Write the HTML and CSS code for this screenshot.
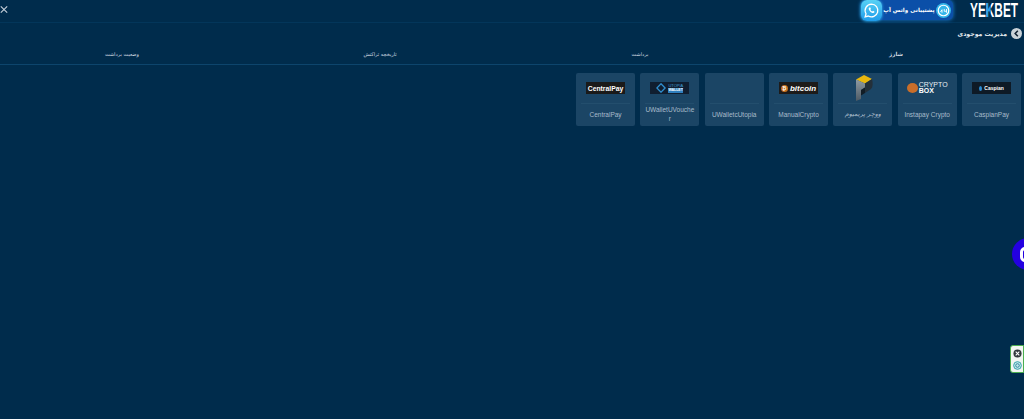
FILE: index.html
```html
<!DOCTYPE html>
<html lang="fa" dir="rtl">
<head>
<meta charset="utf-8">
<title>YEKBET</title>
<link rel="stylesheet" href="styles.css">
</head>
<body>
<div class="page">
  <header class="top">
    <svg class="logo" viewBox="0 0 50 20">
      <defs>
        <linearGradient id="logo-k" gradientUnits="userSpaceOnUse" x1="0" y1="0" x2="50" y2="0">
          <stop offset="0.36" stop-color="#ffffff"/>
          <stop offset="0.37" stop-color="#2a9fe8"/>
          <stop offset="0.44" stop-color="#2a9fe8"/>
          <stop offset="0.45" stop-color="#ffffff"/>
        </linearGradient>
      </defs>
      <text class="logo-text" x="1" y="17" textLength="48" lengthAdjust="spacingAndGlyphs" fill="url(#logo-k)">YEKBET</text>
    </svg>
    <div class="support">
      <span class="support-badge">
        <svg viewBox="0 0 20 20" class="support-ico"><circle cx="10" cy="10" r="7" fill="none" stroke="#fff" stroke-width="1.6"/><path d="M6 12l2-3v4M11 8v3h3M14 8v5" fill="none" stroke="#fff" stroke-width="1.2"/></svg>
      </span>
      <span class="support-text">پشتیبانی واتس آپ</span>
      <span class="wa">
        <svg viewBox="0 0 24 24" class="wa-ico"><path d="M12 3a9 9 0 0 0-7.700 13.600L3 21l4.500-1.200A9 9 0 1 0 12 3z" fill="none" stroke="#fff" stroke-width="1.8"/><path d="M8.800 7.600c-.8.7-1 1.900-.4 3.200 1 2.100 2.800 3.800 4.900 4.600 1.200.4 2.300 0 2.900-.9l-.2-1.100-1.900-.9-.9 1c-1.200-.5-2.200-1.500-2.800-2.700l.8-1-.8-2z" fill="#fff"/></svg>
      </span>
    </div>
    <button class="close" aria-label="close">
      <svg viewBox="0 0 10 10" class="close-ico"><path d="M1 1l8 8M9 1l-8 8" stroke="#c5d0da" stroke-width="1.4"/></svg>
    </button>
  </header>
  <div class="balance">
    <span class="back">
      <svg viewBox="0 0 10 10" class="back-ico"><path d="M6.200 2.500L3.800 5l2.400 2.500" fill="none" stroke="#123" stroke-width="1.4"/></svg>
    </span>
    <span class="balance-text">مدیریت موجودی</span>
  </div>
  <nav class="tabs">
    <a class="tab tab-active">شارژ</a>
    <a class="tab">برداشت</a>
    <a class="tab">تاریخچه تراکنش</a>
    <a class="tab tab-last">وضعیت برداشت</a>
  </nav>
  <section class="cards">
    <div class="card">
      <div class="card-logo"><span class="badge badge-caspian"><i class="drop"></i>Caspian</span></div>
      <div class="card-name">CaspianPay</div>
    </div>
    <div class="card">
      <div class="card-logo"><span class="cbox"><i class="cbox-coin"></i><span class="cbox-text"><span>CRYPTO</span><b>BOX</b></span></span></div>
      <div class="card-name">Instapay Crypto</div>
    </div>
    <div class="card">
      <div class="card-logo card-logo-tall">
        <svg viewBox="0 0 20 26" class="premium">
          <defs>
            <linearGradient id="prem-left" x1="0" y1="0" x2="0" y2="1">
              <stop offset="0" stop-color="#8f9aa2"/>
              <stop offset="1" stop-color="#4d5a65"/>
            </linearGradient>
          </defs>
          <path d="M3 4.500L11 0l8 4-7 4.500z" fill="#e8b70e"/>
          <path d="M12 8.500L19 4c1 4 1 8-1 10l-6 4z" fill="#24303a"/>
          <path d="M3 4.500l9 4v4l-4 2.500v9l-5 2z" fill="url(#prem-left)"/>
          <path d="M8 15l4-2.500V18l-4 2.500z" fill="#121d26"/>
        </svg>
      </div>
      <div class="card-name card-name-fa">ووچر پریمیوم</div>
    </div>
    <div class="card">
      <div class="card-logo"><span class="badge badge-btc"><i class="btc-coin">₿</i><em>bitcoin</em></span></div>
      <div class="card-name">ManualCrypto</div>
    </div>
    <div class="card">
      <div class="card-logo"></div>
      <div class="card-name">UWalletcUtopia</div>
    </div>
    <div class="card">
      <div class="card-logo"><span class="badge badge-utopia"><svg viewBox="0 0 12 12" class="utopia-ico"><path d="M6 1l5 5-5 5-5-5z" fill="none" stroke="#2f8fd0" stroke-width="1.6"/></svg><span class="utopia-text">UTOPIA<b>WALLET</b></span></span></div>
      <div class="card-name card-name-wrap">UWalletUVoucher</div>
    </div>
    <div class="card">
      <div class="card-logo"><span class="badge badge-central">CentralPay</span></div>
      <div class="card-name">CentralPay</div>
    </div>
  </section>
  <div class="chat"><span class="chat-c"></span></div>
  <div class="widget">
    <svg viewBox="0 0 10 10" class="widget-ico"><circle cx="5" cy="5" r="4.500" fill="#33383d"/><path d="M3 3l4 4M7 3l-4 4" stroke="#fff" stroke-width="1.2"/></svg>
    <svg viewBox="0 0 10 10" class="widget-ico"><circle cx="5" cy="5" r="4.300" fill="#bfe9ea" stroke="#2a9aa6" stroke-width="1"/><circle cx="5" cy="5" r="2" fill="none" stroke="#2a7f9a" stroke-width="1"/></svg>
  </div>
</div>
</body>
</html>
```
FILE: styles.css
```css
* { box-sizing: border-box; }
html, body { margin: 0; height: 100%; }
body { background: #002c4c; font-family: "DejaVu Sans", "Liberation Sans", sans-serif; overflow: hidden; }
.page { position: relative; height: 419px; width: 1024px; overflow: hidden; }

.top { height: 23px; display: flex; align-items: flex-start; border-bottom: 1px solid #03365a; padding-right: 5px; gap: 16px; }
.logo { width: 50px; height: 20px; flex: none; direction: ltr; }
.logo-text { font-family: "Liberation Sans", sans-serif; font-weight: 700; font-size: 20px; direction: ltr; }
.support { display: flex; align-items: center; height: 20px; background: #0b4fa8; width: 92px; border-radius: 5px; box-shadow: 0 0 4px #1c7fd6; flex: none; }
.support-badge { width: 15px; height: 15px; border-radius: 50%; background: #35b6ea; margin-right: 2px; display: flex; flex: none; }
.support-ico { width: 15px; height: 15px; }
.support-text { font-size: 5.6px; color: #fff; white-space: nowrap; flex: 1; text-align: center; font-weight: 700; }
.wa { width: 21px; height: 21px; background: linear-gradient(180deg, #58d2f5, #1f9cea); border-radius: 6px; display: flex; align-items: center; justify-content: center; flex: none; box-shadow: 0 0 3px #38c4ff; }
.wa-ico { width: 17px; height: 17px; }
.close { position: absolute; left: 0; top: 5px; background: none; border: 0; padding: 0; width: 8px; height: 9px; }
.close-ico { display: block; width: 8px; height: 9px; }

.balance { display: flex; align-items: center; height: 19px; padding: 1px 2px 0 0; gap: 4px; }
.back { width: 11px; height: 11px; background: #c9d2d8; border-radius: 50%; display: flex; }
.back-ico { width: 11px; height: 11px; }
.balance-text { font-size: 6.2px; color: #e8eef2; font-weight: 700; }

.tabs { display: grid; grid-template-columns: 256px 256px 264px 248px; height: 23px; border-bottom: 1px solid #0d456c; text-align: center; padding-top: 1px; }
.tab { font-size: 5px; line-height: 22px; color: #d5dde3; }
.tab-active { font-weight: 700; font-size: 5.5px; }
.tab-last { margin-right: 4px; }

.cards { display: flex; gap: 5.33px; padding: 8px 3px 0 0; }
.card { width: 59px; height: 53px; background: #1b4565; border-radius: 2px; display: flex; flex-direction: column; padding: 0 5px; }
.card-logo { height: 31px; border-bottom: 1px solid #234e6d; display: flex; align-items: center; justify-content: center; flex: none; }
.card-logo-tall { align-items: flex-start; }
.premium { width: 20px; height: 26px; margin-top: 2px; flex: none; }
.card-name { font-family: "Liberation Sans", sans-serif; font-size: 6.5px; color: #a9bccb; text-align: center; flex: 1; display: flex; align-items: center; justify-content: center; direction: ltr; line-height: 9px; margin: 0 -1px 2px; }
.card-name-wrap { word-break: break-all; }
.card-name-fa { font-family: "DejaVu Sans", sans-serif; font-style: italic; font-size: 6.5px; direction: rtl; }

.badge { display: flex; align-items: center; justify-content: center; width: 39px; height: 12px; background: #17191c; color: #fff; font-family: "Liberation Sans", sans-serif; direction: ltr; overflow: hidden; }
.badge-caspian { font-size: 5px; font-weight: 700; gap: 2px; background: #0e1a26; }
.drop { width: 3px; height: 5px; background: #2a8ad0; border-radius: 50%; }
.badge-btc { font-size: 8px; font-weight: 700; gap: 2px; background: #1d1b1a; }
.badge-btc em { font-style: italic; }
.btc-coin { width: 7px; height: 7px; background: #c6701f; border-radius: 50%; font-size: 5px; line-height: 7px; text-align: center; font-style: normal; font-family: "DejaVu Sans", sans-serif; }
.badge-utopia { gap: 2px; background: #101e30; }
.utopia-ico { width: 10px; height: 10px; }
.utopia-text { font-size: 4px; display: flex; flex-direction: column; line-height: 4.5px; color: #3f9ad6; }
.utopia-text b { color: #fff; background: #2f7fbe; font-size: 3.5px; }
.badge-central { font-size: 6.8px; font-weight: 700; background: #1a1a1a; }
.cbox { display: flex; align-items: center; direction: ltr; font-family: "Liberation Sans", sans-serif; gap: 1px; }
.cbox-coin { width: 11px; height: 10px; background: #c96e2a; border-radius: 50%; flex: none; }
.cbox-text { display: flex; flex-direction: column; font-size: 7px; line-height: 6.5px; color: #e6edf2; }
.cbox-text b { color: #fff; }

.chat { position: absolute; right: -20px; top: 238px; width: 32px; height: 32px; border-radius: 50%; background: #2400e0; }
.chat-c { position: absolute; left: 8px; top: 9px; width: 12px; height: 15px; border: 3px solid #fff; border-radius: 5px; }
.widget { position: absolute; right: 0; top: 345px; width: 14px; height: 28px; background: #f2f6f2; border: 1px solid #4caf50; border-radius: 3px 0 0 3px; display: flex; flex-direction: column; justify-content: center; align-items: center; gap: 3px; }
.widget-ico { width: 9px; height: 9px; }
```
